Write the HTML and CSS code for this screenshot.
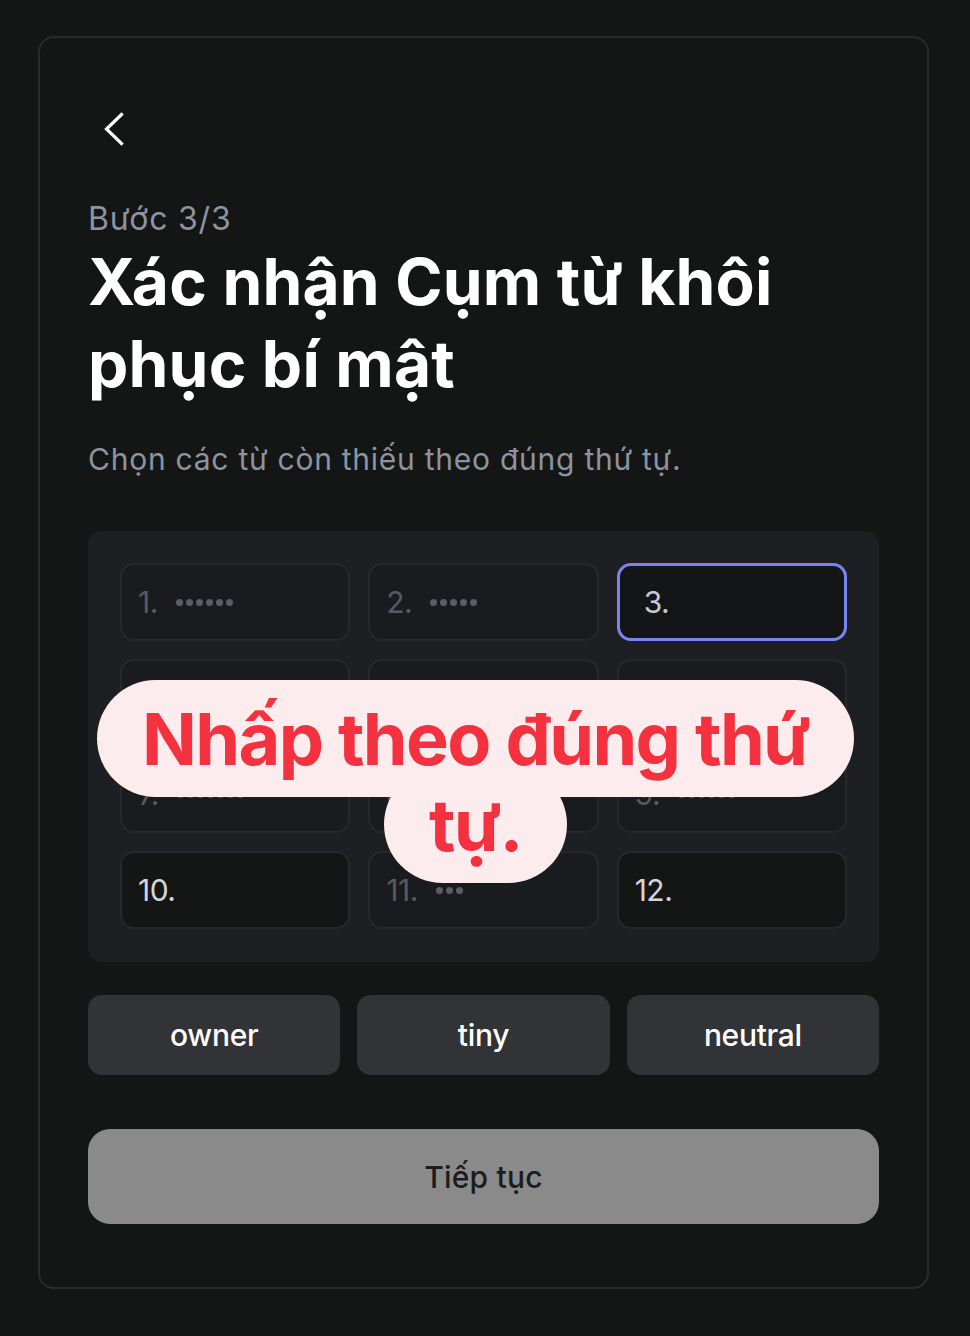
FILE: index.html
```html
<!DOCTYPE html>
<html lang="vi">
<head>
<meta charset="utf-8">
<link rel="stylesheet" href="styles.css">
</head>
<body>
<div class="card">
  <button class="back" aria-label="Quay lại">
    <svg width="44" height="44" viewBox="0 0 44 44"><path d="M24.5 7.5 L9.5 22 L24.5 36.5" fill="none" stroke="#fff" stroke-width="3.2" stroke-linecap="square"/></svg>
  </button>
  <div class="step">Bước 3/3</div>
  <h1 class="title">Xác nhận Cụm từ khôi phục bí mật</h1>
  <p class="sub">Chọn các từ còn thiếu theo đúng thứ tự.</p>

  <div class="panel">
    <div class="grid">
      <div class="cell dim"><span class="num">1.</span><span class="dots"><i></i><i></i><i></i><i></i><i></i><i></i></span></div>
      <div class="cell dim"><span class="num">2.</span><span class="dots"><i></i><i></i><i></i><i></i><i></i></span></div>
      <div class="cell active"><span class="num">3.</span></div>
      <div class="cell dim"><span class="num">4.</span><span class="dots"><i></i><i></i><i></i><i></i><i></i></span></div>
      <div class="cell dim"><span class="num">5.</span><span class="dots"><i></i><i></i><i></i><i></i></span></div>
      <div class="cell dim"><span class="num">6.</span><span class="dots"><i></i><i></i><i></i><i></i><i></i></span></div>
      <div class="cell dim"><span class="num">7.</span><span class="dots"><i></i><i></i><i></i><i></i><i></i><i></i><i></i></span></div>
      <div class="cell dim"><span class="num">8.</span><span class="dots"><i></i><i></i><i></i><i></i><i></i></span></div>
      <div class="cell dim"><span class="num">9.</span><span class="dots"><i></i><i></i><i></i><i></i><i></i><i></i></span></div>
      <div class="cell empty"><span class="num">10.</span></div>
      <div class="cell dim"><span class="num">11.</span><span class="dots"><i></i><i></i><i></i></span></div>
      <div class="cell empty"><span class="num">12.</span></div>
    </div>
    <div class="hint"><span class="hint-text">Nhấp theo đúng thứ<br>tự.</span></div>
  </div>

  <div class="words">
    <button class="word">owner</button>
    <button class="word">tiny</button>
    <button class="word">neutral</button>
  </div>

  <button class="continue">Tiếp tục</button>
</div>
</body>
</html>
```
FILE: styles.css
```css
* { box-sizing: border-box; }
html, body { margin: 0; padding: 0; }
body {
  background: #141616;
  font-family: Inter, "Noto Sans", sans-serif;
  width: 970px;
  height: 1336px;
  padding: 36px 41px 0 38px;
}
.card {
  width: 891px;
  height: 1253px;
  border: 2px solid #2a2b2e;
  border-radius: 16px;
  padding: 69px 48px 0 48px;
  display: flex;
  flex-direction: column;
}
.back {
  width: 44px;
  height: 44px;
  padding: 0;
  margin: 0 0 0 9px;
  background: none;
  border: none;
  display: block;
}
.back svg { display: block; }
.step {
  margin-top: 50px;
  font-size: 32px;
  line-height: 36px;
  color: #8d93a1;
  letter-spacing: 0.8px;
}
.title {
  margin: 4px 0 0 0;
  font-size: 64px;
  line-height: 82px;
  font-weight: 700;
  color: #ffffff;
  letter-spacing: 0.2px;
}
.sub {
  margin: 36px 0 0 0;
  font-size: 30px;
  line-height: 36px;
  color: #8d93a1;
  letter-spacing: 0.75px;
}
.panel {
  position: relative;
  margin-top: 54px;
  background: #1e1f22;
  border-radius: 14px;
  padding: 32px 32px 33px;
}
.grid {
  display: grid;
  grid-template-columns: repeat(3, 1fr);
  grid-auto-rows: 78px;
  gap: 18px;
}
.cell {
  border: 2px solid #27282b;
  border-radius: 14px;
  background: #1a1b1e;
  display: flex;
  align-items: center;
  padding-left: 16px;
  font-size: 30px;
}
.cell .num { letter-spacing: -0.5px; }
.cell.dim { color: #575a61; }
.cell.active {
  border: 3px solid #7b85f2;
  background: #141516;
  color: #c9cace;
  padding-left: 24px;
}
.cell.empty {
  background: #141616;
  color: #d4d5d8;
}
.dots {
  display: flex;
  gap: 3px;
  margin-left: 18px;
}
.cell .dots i {
  width: 7px;
  height: 7px;
  border-radius: 50%;
  background: #5a5d64;
  display: block;
}
.hint {
  position: absolute;
  left: -4px;
  right: 12px;
  top: 165px;
  text-align: center;
  font-size: 72px;
  line-height: 86px;
}
.hint-text {
  font-family: Inter, "Noto Sans", sans-serif;
  font-size: 72px;
  font-weight: 700;
  color: #f3313f;
  background: #fdeced;
  padding: 15px 45px;
  border-radius: 60px;
  letter-spacing: -1.6px;
  -webkit-box-decoration-break: clone;
  box-decoration-break: clone;
}
.words {
  margin-top: 33px;
  display: grid;
  grid-template-columns: repeat(3, 1fr);
  gap: 17px;
}
.word {
  height: 80px;
  border: none;
  border-radius: 14px;
  background: #323337;
  color: #ffffff;
  font-family: Inter, "Noto Sans", sans-serif;
  font-size: 30px;
  font-weight: 500;
  letter-spacing: -0.3px;
}
.continue {
  margin-top: 54px;
  height: 95px;
  width: 100%;
  border: none;
  border-radius: 22px;
  background: #8a8a8a;
  color: #1b1c1e;
  font-family: Inter, "Noto Sans", sans-serif;
  font-size: 30px;
  font-weight: 500;
  letter-spacing: 0.2px;
}
```
